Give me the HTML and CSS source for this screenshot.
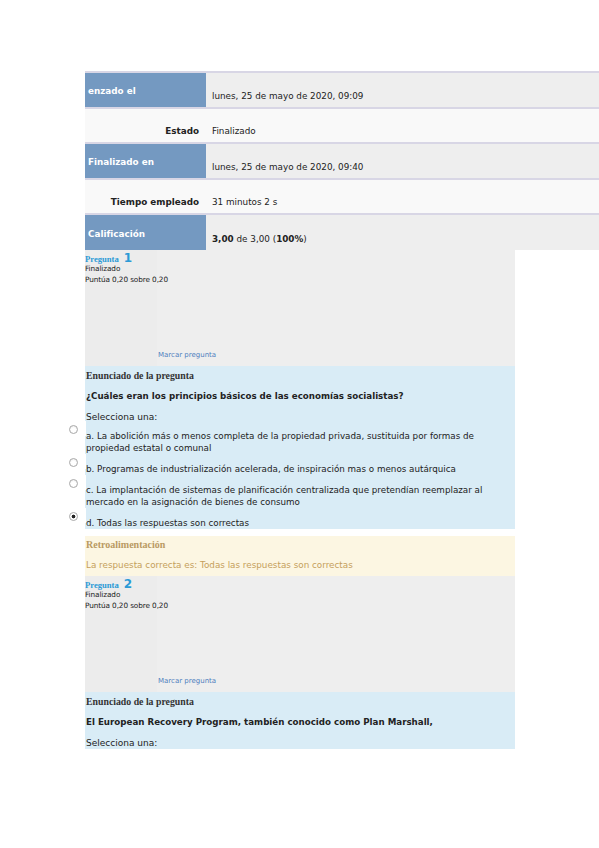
FILE: index.html
```html
<!DOCTYPE html>
<html lang="es">
<head>
<meta charset="utf-8">
<title>Revisión del intento</title>
<link rel="stylesheet" href="styles.css">
</head>
<body>
<div class="page">
  <div class="summary">
    <div class="row odd"><div class="th">enzado el</div><div class="td">lunes, 25 de mayo de 2020, 09:09</div></div>
    <div class="row even r2"><div class="th">Estado</div><div class="td">Finalizado</div></div>
    <div class="row odd"><div class="th">Finalizado en</div><div class="td">lunes, 25 de mayo de 2020, 09:40</div></div>
    <div class="row even r2"><div class="th">Tiempo empleado</div><div class="td">31 minutos 2 s</div></div>
    <div class="row odd last"><div class="th">Calificación</div><div class="td"><span><b>3,00</b> de 3,00 (<b>100%</b>)</span></div></div>
  </div>

  <div class="que">
    <div class="info">
      <div class="qno"><span class="lbl">Pregunta</span> <span class="num">1</span></div>
      <div class="state">Finalizado</div>
      <div class="grade">Puntúa 0,20 sobre 0,20</div>
      <div class="flag">Marcar pregunta</div>
    </div>
    <div class="formulation">
      <div class="accesshide">Enunciado de la pregunta</div>
      <div class="qtext">¿Cuáles eran los principios básicos de las economías socialistas?</div>
      <div class="prompt">Selecciona una:</div>
      <div class="answers">
        <div class="answer"><span class="rbox"><span class="radio"></span></span><span class="atext">a. La abolición más o menos completa de la propiedad privada, sustituida por formas de propiedad estatal o comunal</span></div>
        <div class="answer"><span class="rbox"><span class="radio"></span></span><span class="atext">b. Programas de industrialización acelerada, de inspiración mas o menos autárquica</span></div>
        <div class="answer"><span class="rbox"><span class="radio"></span></span><span class="atext">c. La implantación de sistemas de planificación centralizada que pretendían reemplazar al mercado en la asignación de bienes de consumo</span></div>
        <div class="answer"><span class="rbox"><span class="radio checked"></span></span><span class="atext">d. Todas las respuestas son correctas</span></div>
      </div>
    </div>
    <div class="outcome">
      <div class="fbhead">Retroalimentación</div>
      <div class="fbtext">La respuesta correcta es: Todas las respuestas son correctas</div>
    </div>
  </div>

  <div class="que">
    <div class="info">
      <div class="qno"><span class="lbl">Pregunta</span> <span class="num">2</span></div>
      <div class="state">Finalizado</div>
      <div class="grade">Puntúa 0,20 sobre 0,20</div>
      <div class="flag">Marcar pregunta</div>
    </div>
    <div class="formulation short">
      <div class="accesshide">Enunciado de la pregunta</div>
      <div class="qtext">El European Recovery Program, también conocido como Plan Marshall,</div>
      <div class="prompt">Selecciona una:</div>
    </div>
  </div>
</div>
</body>
</html>
```

FILE: styles.css
```css
html, body {
  margin: 0;
  padding: 0;
  background: #ffffff;
}
body {
  font-family: "DejaVu Sans", "Noto Sans", sans-serif;
  color: #222222;
  width: 599px;
  overflow: hidden;
}
.page {
  padding: 71px 0 60px 85px;
}

/* summary table */
.summary {
  width: 514px;
  border-top: 2px solid #d8d6e5;
}
.row {
  display: grid;
  grid-template-columns: 121px 1fr;
  height: 34px;
  border-bottom: 2px solid #d8d6e5;
  font-size: 8.8px;
  line-height: 12px;
}
.row.r2 { height: 33px; }
.row.last { height: 35px; border-bottom: 0; }
.th, .td {
  display: flex;
  flex-direction: column;
  justify-content: flex-end;
}
.odd .th {
  background: #7499c1;
  color: #ffffff;
  font-weight: bold;
  padding: 0 0 10px 3px;
}
.odd .td {
  background: #eeeeee;
  padding: 0 0 5px 6px;
}
.even .th {
  background: #f9f9f9;
  font-weight: bold;
  text-align: right;
  padding: 0 7px 5px 0;
}
.even .td {
  background: #f9f9f9;
  padding: 0 0 5px 6px;
}
.td b { font-weight: bold; }

/* question */
.que {
  width: 430px;
}
.info {
  height: 116px;
  background: linear-gradient(to right, #ececec 0, #ececec 72px, #eeeeee 72px);
  display: flex;
  flex-direction: column;
  padding-top: 1px;
  box-sizing: border-box;
}
.qno {
  height: 12px;
  line-height: 12px;
  color: #2b9ad6;
}
.qno .lbl {
  font-family: "Liberation Serif", "DejaVu Serif", serif;
  font-weight: bold;
  font-size: 8.6px;
}
.qno .num {
  font-size: 12px;
  font-weight: bold;
}
.state, .grade {
  font-size: 7.3px;
  line-height: 11px;
  color: #222222;
  letter-spacing: -0.1px;
}
.flag {
  margin-top: auto;
  margin-bottom: 6px;
  padding-left: 73px;
  font-size: 7px;
  line-height: 10px;
  color: #4f7fbe;
}

.formulation {
  background: #d9ecf6;
  padding: 4px 0 0 1px;
}
.accesshide {
  font-family: "Liberation Serif", "DejaVu Serif", serif;
  font-weight: bold;
  font-size: 9.8px;
  line-height: 12px;
  color: #333333;
}
.qtext {
  margin-top: 8px;
  font-size: 8.7px;
  font-weight: bold;
  line-height: 12px;
}
.prompt {
  margin-top: 9px;
  font-size: 9px;
  line-height: 12px;
}
.formulation.short .prompt {
  margin-bottom: -2px;
}
.answers {
  margin-top: -2px;
  margin-bottom: -3px;
}
.answer {
  display: flex;
  align-items: flex-start;
}
.rbox {
  flex: 0 0 20px;
  width: 20px;
  height: 15px;
  margin-left: -20px;
  background: #ffffff;
}
.radio {
  display: block;
  width: 7px;
  height: 7px;
  margin: 4px 0 0 3px;
  border-radius: 50%;
  border: 1px solid #a9a9a9;
  background: radial-gradient(circle at 50% 60%, #ffffff 40%, #e4e4e4 100%);
  box-sizing: content-box;
}
.radio.checked {
  background: radial-gradient(circle, #222222 0, #222222 1.6px, #ffffff 2.2px);
}
.atext {
  padding-top: 9px;
  font-size: 8.75px;
  line-height: 12px;
}

.outcome {
  margin-top: 10px;
  background: #fcf6e2;
  padding: 3px 0 5px 1px;
}
.fbhead {
  font-family: "Liberation Serif", "DejaVu Serif", serif;
  font-weight: bold;
  font-size: 10px;
  line-height: 12px;
  color: #b99a62;
}
.fbtext {
  margin-top: 8px;
  font-size: 8.8px;
  line-height: 12px;
  color: #c59f5c;
}
```
